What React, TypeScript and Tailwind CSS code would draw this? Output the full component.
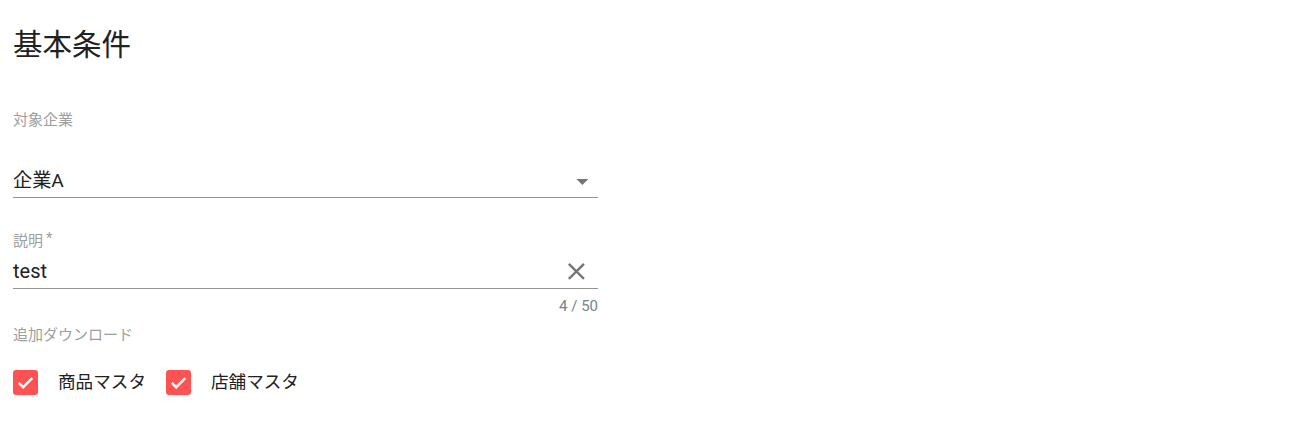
import React from "react";

const font = { fontFamily: "Roboto, 'Noto Sans CJK JP', sans-serif" };

function Check({ label }: { label: string }) {
  return (
    <div className="flex items-center">
      <div className="w-[25px] h-[25px] rounded-[3px] bg-[#ff5252] flex items-center justify-center">
        <svg width="25" height="25" viewBox="0 0 25 25">
          <path d="M5.8 12.8 L10.2 17.2 L19.2 8.2" fill="none" stroke="white" strokeWidth="2.4" />
        </svg>
      </div>
      <span className="ml-[20px] text-[17.6px] leading-[28px] text-[#212121]">{label}</span>
    </div>
  );
}

export default function App() {
  return (
    <div className="bg-white w-[1290px] h-[429px]" style={font}>
      <div className="pl-[13px] w-[598px]">
        <div className="pt-[25px] h-[65px] text-[29.5px] leading-[40px] text-[#212121]">基本条件</div>
        <div className="mt-[45px] h-[20px] text-[15px] leading-[20px] text-[#9e9e9e]">対象企業</div>
        <div className="mt-[37px] h-[31px] flex items-start border-b border-[#949494]">
          <div className="flex-1 text-[19.2px] leading-[28px] text-[#212121]">企業A</div>
          <svg width="28.8" height="28.8" viewBox="0 0 24 24" className="mr-[1px]">
            <path d="M7,10L12,15L17,10H7Z" fill="#757575" />
          </svg>
        </div>
        <div className="mt-[33px] h-[20px] text-[15px] leading-[20px] text-[#9e9e9e]">説明<span className="ml-[3px] relative top-[-3px]">*</span></div>
        <div className="mt-[6px] h-[32px] flex items-start border-b border-[#949494]">
          <div className="flex-1 text-[20px] leading-[28px] text-[#212121]">test</div>
          <svg width="28.8" height="28.8" viewBox="0 0 24 24" className="mr-[7px]">
            <path d="M19,6.41L17.59,5L12,10.59L6.41,5L5,6.41L10.59,12L5,17.59L6.41,19L12,13.41L17.59,19L19,17.59L13.41,12L19,6.41Z" fill="#757575" />
          </svg>
        </div>
        <div className="mt-[9px] h-[16px] text-right text-[15px] leading-[16px] text-[#78828c]">4 / 50</div>
        <div className="mt-[11px] h-[20px] text-[15px] leading-[20px] text-[#9e9e9e]">追加ダウンロード</div>
        <div className="mt-[23px] flex items-center gap-[20px]">
          <Check label="商品マスタ" />
          <Check label="店舗マスタ" />
        </div>
      </div>
    </div>
  );
}
